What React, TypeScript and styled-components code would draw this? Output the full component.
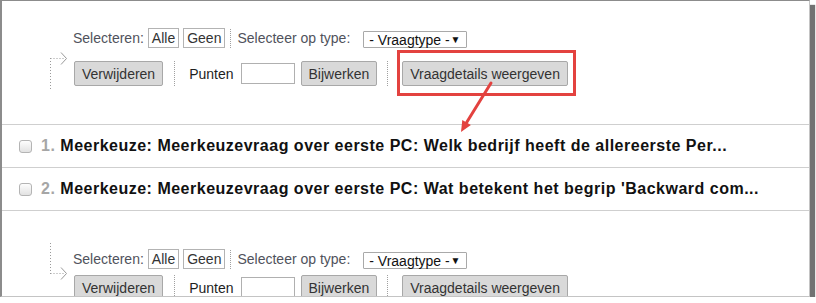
import React from "react";
import styled, { createGlobalStyle, css } from "styled-components";

const GlobalStyle = createGlobalStyle`
  html, body { margin: 0; padding: 0; background: #fff; }
  body { font-family: "Liberation Sans", Arial, sans-serif; }
`;

const Frame = styled.div`
  position: relative;
  box-sizing: border-box;
  width: 810px;
  height: 297px;
  border-top: 1px solid #8c8c8c;
  border-left: 2px solid #8c8c8c;
  border-right: 1px solid #c4c4c4;
  border-bottom: 1px solid #c4c4c4;
  box-shadow: 5px 5px 1px #727272;
  background: #fff;
  overflow: hidden;
`;

const Toolbar = styled.div<{ $top: number; $gap: number }>`
  display: grid;
  grid-template-columns: 25px auto;
  grid-template-rows: 20px 27px;
  row-gap: ${(p) => p.$gap}px;
  padding: ${(p) => p.$top}px 0 0 46px;
`;

const ConnectorSvg = styled.svg`
  grid-column: 1;
  grid-row: 1 / 3;
  width: 25px;
  height: 100%;
  overflow: visible;
`;

const Line = styled.div<{ $row: number }>`
  grid-column: 2;
  grid-row: ${(p) => p.$row};
  display: flex;
  align-items: center;
`;

const Label = styled.span<{ $dark?: boolean; $ml?: number }>`
  font-size: 14px;
  color: ${(p) => (p.$dark ? "#1e1e1e" : "#50525c")};
  margin-left: ${(p) => p.$ml ?? 0}px;
  white-space: nowrap;
`;

const SmallBox = styled.span<{ $ml?: number }>`
  box-sizing: border-box;
  height: 20px;
  line-height: 18px;
  padding: 0 3px;
  border: 1px solid #b3b3b3;
  background: #fff;
  font-size: 14px;
  color: #333;
  margin-left: ${(p) => p.$ml ?? 0}px;
`;

const DotSep = styled.span<{ $ml: number; $h: number }>`
  width: 0;
  height: ${(p) => p.$h}px;
  border-left: 1px dotted #a0a0a0;
  margin-left: ${(p) => p.$ml}px;
`;

const Select = styled.span<{ $ml: number }>`
  box-sizing: border-box;
  display: flex;
  align-items: center;
  justify-content: space-between;
  width: 104px;
  height: 17px;
  margin-top: 3px;
  margin-left: ${(p) => p.$ml}px;
  padding: 0 6px 0 5px;
  border: 1px solid #a9a9a9;
  border-radius: 1px;
  background: #fff;
  font-size: 14px;
  color: #111;
`;

const Caret = styled.span`
  font-size: 10px;
  color: #111;
`;

const Button = styled.button<{ $ml?: number }>`
  box-sizing: border-box;
  height: 25px;
  padding: 0 7px;
  margin: 0 0 0 ${(p) => p.$ml ?? 0}px;
  font: 14px "Liberation Sans", Arial, sans-serif;
  color: #333;
  background: #d9d9d9;
  border: 1px solid #a8a8a8;
  border-radius: 2px;
  white-space: nowrap;
`;

const PointsInput = styled.input`
  box-sizing: border-box;
  width: 54px;
  height: 21px;
  margin-left: 7px;
  border: 1px solid #b0b0b0;
  background: #fff;
  padding: 0;
`;

const Highlight = styled.span<{ $on: boolean; $ml: number }>`
  position: relative;
  display: inline-flex;
  margin-left: ${(p) => p.$ml}px;
  ${(p) =>
    p.$on &&
    css`
      &::after {
        content: "";
        position: absolute;
        left: -5px;
        right: -8px;
        top: -11px;
        bottom: -10px;
        border: 3px solid #e3423f;
        pointer-events: none;
      }
    `}
`;

const List = styled.div`
  margin-top: 37px;
  border-top: 1px solid #cfcfcf;
`;

const Row = styled.div`
  display: flex;
  align-items: center;
  gap: 9px;
  height: 42px;
  padding-left: 17px;
  border-bottom: 1px solid #cfcfcf;
`;

const CheckBox = styled.span`
  box-sizing: border-box;
  width: 13px;
  height: 13px;
  border: 1px solid #b4b4b4;
  border-radius: 3px;
  background: linear-gradient(#fdfdfd, #e2e2e2);
`;

const Title = styled.span`
  font-size: 16px;
  font-weight: bold;
  letter-spacing: 0.5px;
  color: #111;
  white-space: pre;
`;

const Num = styled.span`
  color: #a6a6a6;
`;

const ArrowSvg = styled.svg`
  position: absolute;
  left: 438px;
  top: 69px;
  width: 60px;
  height: 70px;
  pointer-events: none;
`;

function Connector({ up }: { up: boolean }) {
  const y = up ? 30.5 : 24.5;
  const v1 = up ? 30 : -6;
  const v2 = up ? 61 : 25;
  return (
    <ConnectorSvg>
      <g stroke="#9a9a9a" strokeWidth="1" fill="none">
        <line x1="2.5" y1={v1} x2="2.5" y2={v2} strokeDasharray="1 2" />
        <line x1="2.5" y1={y} x2="16" y2={y} strokeDasharray="1 2" />
        <polyline points={`13,${y - 6} 18.5,${y} 13,${y + 6}`} />
      </g>
    </ConnectorSvg>
  );
}

function Controls({ top, gap, up, highlight }: { top: number; gap: number; up: boolean; highlight: boolean }) {
  return (
    <Toolbar $top={top} $gap={gap}>
      <Connector up={up} />
      <Line $row={1}>
        <Label>Selecteren:</Label>
        <SmallBox $ml={4}>Alle</SmallBox>
        <SmallBox $ml={4}>Geen</SmallBox>
        <DotSep $ml={5} $h={19} />
        <Label $ml={6}>Selecteer op type:</Label>
        <Select $ml={13}>
          <span>- Vraagtype -</span>
          <Caret>▼</Caret>
        </Select>
      </Line>
      <Line $row={2}>
        <Button $ml={1}>Verwijderen</Button>
        <DotSep $ml={11} $h={25} />
        <Label $dark $ml={14}>Punten</Label>
        <PointsInput />
        <Button $ml={6}>Bijwerken</Button>
        <DotSep $ml={10} $h={25} />
        <Highlight $on={highlight} $ml={14}>
          <Button>Vraagdetails weergeven</Button>
        </Highlight>
      </Line>
    </Toolbar>
  );
}

const questions = [
  { n: "1.", text: "Meerkeuze: Meerkeuzevraag over eerste PC: Welk bedrijf heeft de allereerste Per..." },
  { n: "2.", text: "Meerkeuze: Meerkeuzevraag over eerste PC: Wat betekent het begrip 'Backward com..." },
];

export default function App() {
  return (
    <>
      <GlobalStyle />
      <Frame>
        <Controls top={27} gap={12} up highlight />
        <List>
          {questions.map((q) => (
            <Row key={q.n}>
              <CheckBox />
              <Title>
                <Num>{q.n}</Num> {q.text}
              </Title>
            </Row>
          ))}
        </List>
        <Controls top={38} gap={5} up={false} highlight={false} />
        <ArrowSvg viewBox="0 0 60 70">
          <line x1="51" y1="13" x2="26.6" y2="52.5" stroke="#e3423f" strokeWidth="3" strokeLinecap="round" />
          <polygon points="21,62 30.9,55.1 22.3,50" fill="#e3423f" />
        </ArrowSvg>
      </Frame>
    </>
  );
}
